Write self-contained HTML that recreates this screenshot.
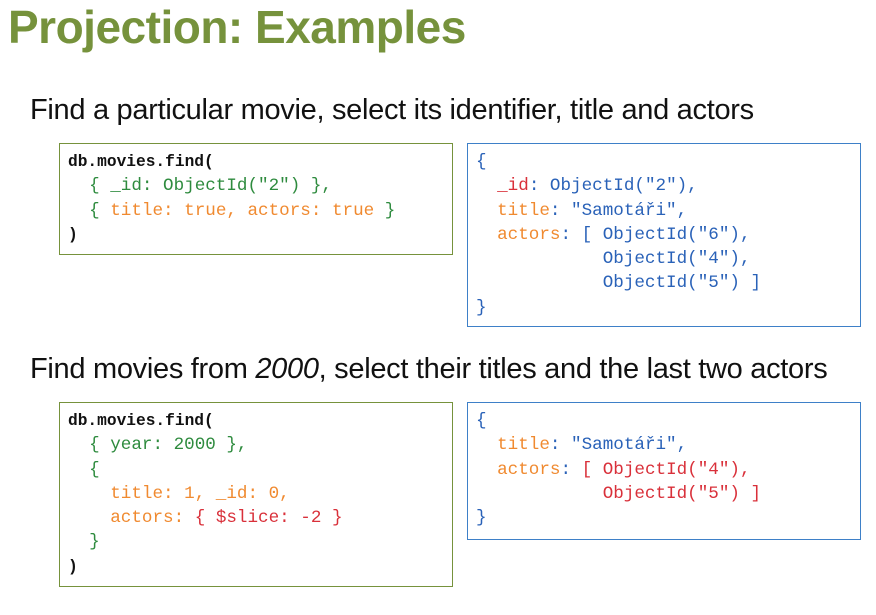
<!DOCTYPE html>
<html><head><meta charset="utf-8"><style>
body{margin:0;width:876px;height:615px;background:#fff;position:relative;overflow:hidden;font-family:"Liberation Sans",sans-serif}
h1{position:absolute;left:8px;top:0px;margin:0;font-size:46px;font-weight:bold;color:#76923c;letter-spacing:-0.5px}
.sub{position:absolute;left:30px;font-size:29px;color:#111;letter-spacing:-0.3px;line-height:32px}
.box{position:absolute;box-sizing:border-box;padding:6px 0 0 8px;font-family:"Liberation Mono",monospace;font-size:17.6px;line-height:24.3px;white-space:pre}
.g{border:1.5px solid #76923c}.b{border:1.5px solid #3e80c8}
.k{color:#111;font-weight:bold;font-size:16.2px}.gr{color:#2e8b3e}.o{color:#f08a30}.bl{color:#2a62b8}.r{color:#d9303a}
</style></head><body>
<h1>Projection: Examples</h1>
<div class="sub" style="top:94px">Find a particular movie, select its identifier, title and actors</div>
<div class="box g" style="left:59px;top:143px;width:394px;height:112px"><span class="k">db.movies.find(</span>
<span class="gr">  { _id: ObjectId("2") },</span>
<span class="gr">  { </span><span class="o">title: true, actors: true</span><span class="gr"> }</span>
<span class="k">)</span></div>
<div class="box b" style="left:467px;top:143px;width:394px;height:184px"><span class="bl">{</span>
  <span class="r">_id</span><span class="bl">: ObjectId("2"),</span>
  <span class="o">title</span><span class="bl">: "Samotáři",</span>
  <span class="o">actors</span><span class="bl">: [ ObjectId("6"),
            ObjectId("4"),
            ObjectId("5") ]</span>
<span class="bl">}</span></div>
<div class="sub" style="top:353px">Find movies from <i>2000</i>, select their titles and the last two actors</div>
<div class="box g" style="left:59px;top:402px;width:394px;height:185px"><span class="k">db.movies.find(</span>
<span class="gr">  { year: 2000 },</span>
<span class="gr">  {</span>
<span class="o">    title: 1, _id: 0,</span>
<span class="o">    actors: </span><span class="r">{ $slice: -2 }</span>
<span class="gr">  }</span>
<span class="k">)</span></div>
<div class="box b" style="left:467px;top:402px;width:394px;height:138px"><span class="bl">{</span>
  <span class="o">title</span><span class="bl">: "Samotáři",</span>
  <span class="o">actors</span><span class="bl">: </span><span class="r">[ ObjectId("4"),
            ObjectId("5") ]</span>
<span class="bl">}</span></div>
</body></html>
